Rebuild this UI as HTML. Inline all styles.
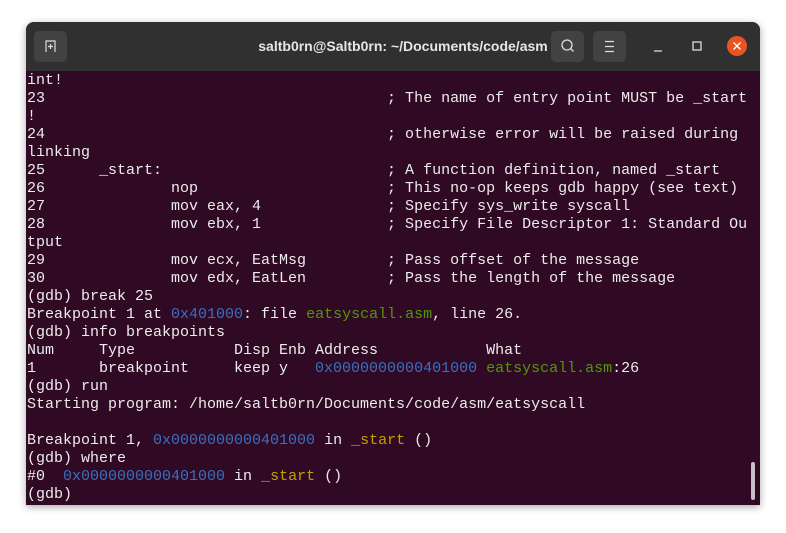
<!DOCTYPE html>
<html><head><style>
body{margin:0;width:786px;height:533px;background:#fff;position:relative;overflow:hidden;font-family:"Liberation Sans",sans-serif}
.win{position:absolute;left:26px;top:22px;width:734px;height:483px;border-radius:8px 8px 0 0;overflow:hidden;box-shadow:0 2px 8px rgba(0,0,0,.35);background:#300a24}
.bar{position:absolute;left:0;top:0;width:734px;height:49px;background:#303030}
.btn{position:absolute;top:9px;width:33px;height:31px;background:#424242;border-radius:5px}
.title{position:absolute;left:0;width:734px;top:16px;text-align:center;color:#e6e6e6;font-weight:bold;font-size:14px;padding-left:20px;box-sizing:border-box}
pre{position:absolute;left:1px;top:50px;margin:0;font-family:"Liberation Mono",monospace;font-size:15px;line-height:18px;color:#ececec}
.b{color:#3a6fc0}.g{color:#4e9a06}.y{color:#c4a000}
</style></head><body>
<div class="win">
<div class="bar">
<div class="btn" style="left:8px"><svg width="33" height="31"><path d="M12 21V10h9v11M16.5 13v5M14 15.5h5" stroke="#ddd" fill="none" stroke-width="1.2"/></svg></div>
<div class="title">saltb0rn@Saltb0rn: ~/Documents/code/asm</div>
<div class="btn" style="left:525px"><svg width="33" height="31"><circle cx="16" cy="14" r="5" stroke="#ddd" fill="none" stroke-width="1.3"/><path d="M19.5 17.5l3 3" stroke="#ddd" stroke-width="1.3"/></svg></div>
<div class="btn" style="left:567px"><svg width="33" height="31"><path d="M12 10.5h9M12 15.5h9M12 20.5h9" stroke="#ddd" stroke-width="1.2"/></svg></div>
<svg style="position:absolute;left:620px;top:14px" width="110" height="22"><path d="M8 15h8" stroke="#ddd" stroke-width="1.3"/><rect x="47" y="6" width="8" height="8" stroke="#ddd" fill="none" stroke-width="1.3"/><circle cx="91" cy="10" r="10" fill="#e95420"/><path d="M87.5 6.5l7 7M94.5 6.5l-7 7" stroke="#fff" stroke-width="1.4"/></svg>
</div>
<pre>int!
23                                      ; The name of entry point MUST be _start
!
24                                      ; otherwise error will be raised during
linking
25      _start:                         ; A function definition, named _start
26              nop                     ; This no-op keeps gdb happy (see text)
27              mov eax, 4              ; Specify sys_write syscall
28              mov ebx, 1              ; Specify File Descriptor 1: Standard Ou
tput
29              mov ecx, EatMsg         ; Pass offset of the message
30              mov edx, EatLen         ; Pass the length of the message
(gdb) break 25
Breakpoint 1 at <span class="b">0x401000</span>: file <span class="g">eatsyscall.asm</span>, line 26.
(gdb) info breakpoints
Num     Type           Disp Enb Address            What
1       breakpoint     keep y   <span class="b">0x0000000000401000</span> <span class="g">eatsyscall.asm</span>:26
(gdb) run
Starting program: /home/saltb0rn/Documents/code/asm/eatsyscall

Breakpoint 1, <span class="b">0x0000000000401000</span> in <span class="y">_start</span> ()
(gdb) where
#0  <span class="b">0x0000000000401000</span> in <span class="y">_start</span> ()
(gdb) </pre>
<div style="position:absolute;left:725px;top:440px;width:4px;height:38px;border-radius:2px;background:#c8c0c6"></div>
</div>
</body></html>
